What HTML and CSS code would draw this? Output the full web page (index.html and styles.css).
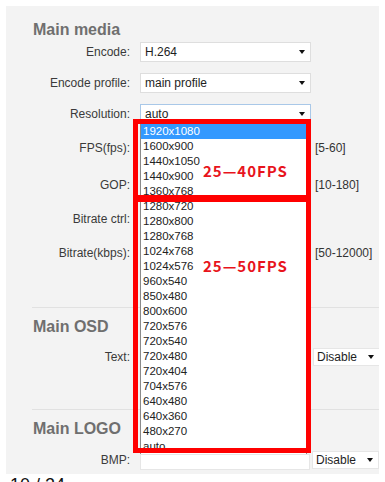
FILE: index.html
```html
<!DOCTYPE html>
<html lang="en">
<head>
  <meta charset="UTF-8" />
  <meta name="viewport" content="width=device-width, initial-scale=1" />
  <title>Main media settings</title>
  <link rel="stylesheet" href="styles.css">
</head>
<body>
  <div class="panel">
    <!-- Main media -->
    <section class="group group-media">
      <h2 class="group-title">Main media</h2>
      <div class="row">
        <span class="label">Encode:</span>
        <div class="select"><span>H.264</span></div>
      </div>
      <div class="row">
        <span class="label">Encode profile:</span>
        <div class="select"><span>main profile</span></div>
      </div>
      <div class="row">
        <span class="label">Resolution:</span>
        <div class="select select-open"><span>auto</span></div>
      </div>
      <div class="row row-tall">
        <span class="label">FPS(fps):</span>
        <div class="field"></div>
        <span class="hint">[5-60]</span>
      </div>
      <div class="row row-tall">
        <span class="label">GOP:</span>
        <div class="field"></div>
        <span class="hint">[10-180]</span>
      </div>
      <div class="row">
        <span class="label">Bitrate ctrl:</span>
        <div class="select"></div>
      </div>
      <div class="row row-tall">
        <span class="label">Bitrate(kbps):</span>
        <div class="field"></div>
        <span class="hint">[50-12000]</span>
      </div>
    </section>

    <!-- Main OSD -->
    <section class="group group-osd">
      <h2 class="group-title">Main OSD</h2>
      <div class="row">
        <span class="label">Text:</span>
        <div class="field"></div>
        <div class="select select-small"><span>Disable</span></div>
      </div>
    </section>

    <!-- Main LOGO -->
    <section class="group group-logo">
      <h2 class="group-title">Main LOGO</h2>
      <div class="row">
        <span class="label">BMP:</span>
        <div class="field field-bmp"></div>
        <div class="select select-small"><span>Disable</span></div>
      </div>
    </section>

    <!-- Open resolution list -->
    <ul class="dropdown">
      <li class="selected">1920x1080</li>
      <li>1600x900</li>
      <li>1440x1050</li>
      <li>1440x900</li>
      <li>1360x768</li>
      <li>1280x720</li>
      <li>1280x800</li>
      <li>1280x768</li>
      <li>1024x768</li>
      <li>1024x576</li>
      <li>960x540</li>
      <li>850x480</li>
      <li>800x600</li>
      <li>720x576</li>
      <li>720x540</li>
      <li>720x480</li>
      <li>720x404</li>
      <li>704x576</li>
      <li>640x480</li>
      <li>640x360</li>
      <li>480x270</li>
      <li>auto</li>
    </ul>

    <!-- Annotations -->
    <div class="mark mark-top"><span class="mark-text">25—40FPS</span></div>
    <div class="mark mark-bottom"><span class="mark-text">25—50FPS</span></div>
  </div>
  <div class="page-num">10 / 24</div>
</body>
</html>
```

FILE: styles.css
```css
* {
  box-sizing: border-box;
  margin: 0;
  padding: 0;
}
body {
  font-family: "Liberation Sans", Arial, sans-serif;
  background: #fff;
  color: #333;
  margin: 6px;
  font-size: 12px;
}
.panel {
  position: relative;
  width: 374px;
  height: 468px;
  background: #f3f3f3;
  padding-left: 26px;
  overflow: hidden;
}
.group + .group {
  border-top: 1px solid #e1e1e1;
}
.group-media {
  padding-top: 14px;
  padding-bottom: 30px;
}
.group-osd {
  padding-top: 9px;
  padding-bottom: 31px;
}
.group-logo {
  padding-top: 9px;
}
.group-title {
  font-size: 16px;
  line-height: 20px;
  font-weight: bold;
  color: #6f6f6f;
  padding-left: 1px;
  margin-bottom: 10px;
}
.group-media .group-title {
  margin-bottom: 2px;
}
.group-logo .group-title {
  margin-bottom: 11px;
}
.row {
  display: flex;
  align-items: center;
  height: 20px;
  margin-bottom: 11px;
}
.group:last-of-type .row {
  margin-bottom: 0;
}
.row-tall {
  height: 26px;
}
.label {
  width: 98px;
  margin-right: 10px;
  text-align: right;
  color: #3a3a3a;
  white-space: nowrap;
}
.select {
  display: flex;
  align-items: center;
  width: 171px;
  height: 20px;
  background: #fff;
  border: 1px solid #dedede;
  padding-left: 4px;
  color: #1e1e1e;
  flex-shrink: 0;
}
.select::after {
  content: "";
  margin-left: auto;
  margin-right: 5px;
  border-left: 3.5px solid transparent;
  border-right: 3.5px solid transparent;
  border-top: 4px solid #111;
}
.select-open {
  border-color: #a9c8e8;
}
.select-small {
  width: 67px;
  height: 18px;
  margin-left: 2px;
  padding-left: 3px;
  border-color: #e6e6e6;
}
.field {
  width: 171px;
  height: 20px;
  background: #fff;
  border: 1px solid #e6e6e6;
  flex-shrink: 0;
}
.field-bmp {
  width: 170px;
  height: 16px;
  margin-top: 3px;
}
.hint {
  align-self: flex-start;
  padding-top: 6px;
  margin-left: 4px;
  line-height: 14px;
  color: #333;
  white-space: nowrap;
}
.dropdown {
  position: absolute;
  left: 134px;
  top: 118px;
  width: 167px;
  height: 330px;
  list-style: none;
  background: #fff;
  border-left: 1px solid #8a8a8a;
  border-right: 1px solid #8a8a8a;
  overflow: hidden;
}
.dropdown li {
  height: 15px;
  line-height: 15px;
  padding-left: 2px;
  font-size: 11.5px;
  color: #222;
}
.dropdown li.selected {
  background: #3399ff;
  color: #fff;
}
.mark {
  position: absolute;
  left: 127px;
  width: 178px;
  border: 5px solid #ff0000;
  padding-left: 65px;
}
.mark-top {
  top: 113px;
  height: 81px;
  padding-top: 38px;
}
.mark-bottom {
  top: 191px;
  height: 256px;
  padding-top: 55px;
}
.mark-text {
  display: block;
  font-family: "Noto Sans CJK SC", "Liberation Sans", sans-serif;
  font-weight: bold;
  font-size: 15px;
  line-height: 18px;
  letter-spacing: 1px;
  color: #e8141c;
}
.page-num {
  margin-top: 1px;
  padding-left: 4px;
  font-size: 18px;
  line-height: 20px;
  color: #111;
}
```
